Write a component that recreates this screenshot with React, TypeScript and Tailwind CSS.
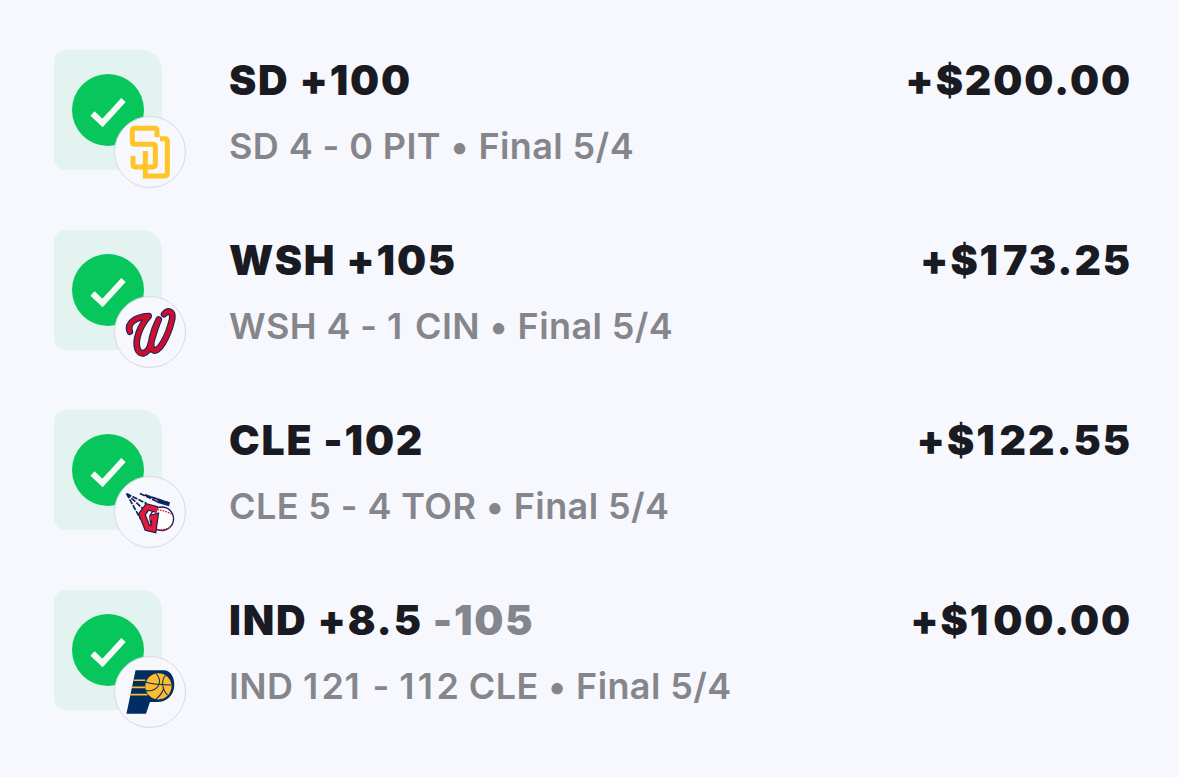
import React from 'react';

// all logos share the badge box, coords traced from the badge at 3x
const SdLogo = () => (
  <svg viewBox="222 228 216 216" className="w-[72px] h-[72px]" fill="none" stroke="#ffc425" strokeWidth="15">
    <path d="M351 292V272Q351 265 344 265H285Q277 265 277 273V305Q277 313 285 313H338Q346 313 346 321V373Q346 381 338 381H287Q279 381 279 373V348" />
    <path d="M316 333V408H374Q382 408 382 400V304Q382 296 374 296H360" />
  </svg>
);

const wPath =
  'M90 124C80 98 108 80 146 78C120 106 104 150 113 176C120 196 142 190 150 168C156 146 166 110 176 88C160 120 146 164 158 178C174 192 204 140 216 86C219 62 204 58 192 72';

const WLogo = () => (
  <svg viewBox="43 18 214 214" className="w-[72px] h-[72px]" fill="none" strokeLinecap="round" strokeLinejoin="round">
    <path d={wPath} stroke="#14225a" strokeWidth="20" />
    <path d={wPath} stroke="#c8102e" strokeWidth="14" />
  </svg>
);

const gPath = 'M172 118L142 110L126 132L142 172L160 176L165 140L150 144';

const CleLogo = () => (
  <svg viewBox="43 18 214 214" className="w-[72px] h-[72px]">
    <g stroke="#14225a" strokeWidth="5" strokeDasharray="16 4" fill="none">
      <path d="M80 70L122 146M80 70L132 118M80 70L140 100M120 70L176 96M135 74L190 92M150 80L206 98" />
    </g>
    <circle cx="185" cy="145" r="35" fill="#fff" stroke="#14225a" strokeWidth="4" />
    <path d="M172 118C188 120 204 126 216 132M166 176C180 182 198 176 212 170" stroke="#e31937" strokeWidth="4" strokeDasharray="5 3" fill="none" />
    <path d="M172 92L208 102" stroke="#14225a" strokeWidth="12" fill="none" />
    <path d={gPath} stroke="#14225a" strokeWidth="21" fill="none" />
    <path d={gPath} stroke="#e31937" strokeWidth="14" fill="none" />
  </svg>
);

const IndLogo = () => (
  <svg viewBox="43 18 214 214" className="w-[72px] h-[72px]">
    <path d="M107 60H190C212 60 224 82 222 108C220 136 198 155 172 155H150L138 190H80Z" fill="#002d62" />
    <circle cx="175" cy="108" r="39" fill="#fdbb30" />
    <path d="M168 70C180 84 182 96 174 108C166 120 150 124 136 120M196 76C184 88 184 116 202 134M138 96C160 102 190 104 213 104M168 146C178 138 186 128 190 116" stroke="#002d62" strokeWidth="3" fill="none" />
    <path d="M101 90H136M96 111H136M91 133H142" stroke="#fdbb30" strokeWidth="5" />
  </svg>
);

type Pick = {
  title: string;
  juice?: string;
  amount: string;
  detail: string;
  logo: React.ReactNode;
};

const picks: Pick[] = [
  { title: 'SD +100', amount: '+$200.00', detail: 'SD 4 - 0 PIT • Final 5/4', logo: <SdLogo /> },
  { title: 'WSH +105', amount: '+$173.25', detail: 'WSH 4 - 1 CIN • Final 5/4', logo: <WLogo /> },
  { title: 'CLE -102', amount: '+$122.55', detail: 'CLE 5 - 4 TOR • Final 5/4', logo: <CleLogo /> },
  { title: 'IND +8.5', juice: '-105', amount: '+$100.00', detail: 'IND 121 - 112 CLE • Final 5/4', logo: <IndLogo /> },
];

// the 1 in the source font is wider than Inter's, so pad it
const WideOnes = ({ text, className }: { text: string; className: string }) => (
  <>
    {text.split(/(1)/).map((part, i) =>
      part === '1' ? (
        <span key={i} className={className}>
          1
        </span>
      ) : (
        part
      ),
    )}
  </>
);

const PickRow = ({ pick }: { pick: Pick }) => (
  <div className="flex h-[180px] pt-[50px]">
    <div className="relative w-[108px] h-[120px] shrink-0 rounded-r-[20px] rounded-l-[12px] bg-[#e3f3ef] flex items-center pl-[18px]">
      <div className="w-[72px] h-[72px] rounded-full bg-[#07c65c]">
        <svg viewBox="0 0 72 72" className="w-[72px] h-[72px]" fill="none" stroke="#f4fbf7" strokeWidth="6" strokeLinejoin="miter">
          <path d="M20.500 39.500L30.500 49L51.500 26" />
        </svg>
      </div>
      <div className="absolute left-[60px] top-[66px] w-[72px] h-[72px] rounded-full bg-[#f7f8fd] border border-[#d9dae0] flex items-center justify-center overflow-hidden">
        <div className="shrink-0 w-[72px] h-[72px]">{pick.logo}</div>
      </div>
    </div>
    <div className="ml-[67px] flex-1 min-w-0">
      <div className="flex justify-between items-start">
        <div className="text-[41px] leading-[60px] font-black tracking-[1.8px] text-[#1a1b22]">
          {pick.title}
          {pick.juice && <span className="text-[#85868c]"> {pick.juice}</span>}
        </div>
        <div className="text-[41px] leading-[60px] font-black tracking-[1.9px] -mr-[2px] text-[#1a1b22]">
          <WideOnes text={pick.amount} className="tracking-[4.9px]" />
        </div>
      </div>
      <div className="mt-[11px] text-[36px] leading-[50px] font-semibold tracking-[0.4px] text-[#85868c]">
        <WideOnes text={pick.detail} className="tracking-[3.4px]" />
      </div>
    </div>
  </div>
);

export default function App() {
  return (
    <div className="w-[1179px] h-[777px] overflow-hidden bg-[#f7f8fd] pl-[54px] pr-[49px] font-['Inter',sans-serif]">
      {picks.map((pick) => (
        <PickRow key={pick.title} pick={pick} />
      ))}
    </div>
  );
}
